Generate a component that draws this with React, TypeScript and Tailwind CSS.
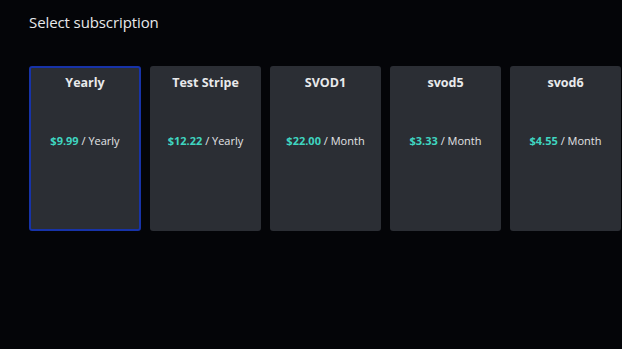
const plans = [
  { name: 'Yearly', price: '$9.99', period: 'Yearly', selected: true },
  { name: 'Test Stripe', price: '$12.22', period: 'Yearly' },
  { name: 'SVOD1', price: '$22.00', period: 'Month' },
  { name: 'svod5', price: '$3.33', period: 'Month' },
  { name: 'svod6', price: '$4.55', period: 'Month' },
];

export default function App() {
  return (
    <div className="w-[622px] h-[349px] bg-[#040508] overflow-hidden font-['Open_Sans','Noto_Sans',sans-serif] text-[#e8e9eb]">
      <h1 className="pl-[29px] pt-[11px] text-[15px] leading-[22px] tracking-[-0.1px]">Select subscription</h1>

      <div className="flex gap-[9px] pl-[29px] mt-[33px]">
        {plans.map((p) => (
          <div
            key={p.name}
            className={
              p.selected
                ? 'w-[112px] h-[165px] shrink-0 rounded-[3px] bg-[#2b2e34] border-2 border-[#1733a8] flex flex-col items-center'
                : 'w-[111px] h-[165px] shrink-0 rounded-[3px] bg-[#2b2e34] flex flex-col items-center'
            }
          >
            <div className={p.selected ? 'mt-[5px] text-[12.5px] font-bold leading-[20px]' : 'mt-[7px] text-[12.5px] font-bold leading-[20px]'}>
              {p.name}
            </div>
            <div className="mt-[40px] text-[11px] leading-[16px] whitespace-nowrap">
              <span className="font-bold text-[#3fd5c0]">{p.price}</span>
              <span className="text-[#e3e4e6]"> / {p.period}</span>
            </div>
          </div>
        ))}
      </div>
    </div>
  );
}
